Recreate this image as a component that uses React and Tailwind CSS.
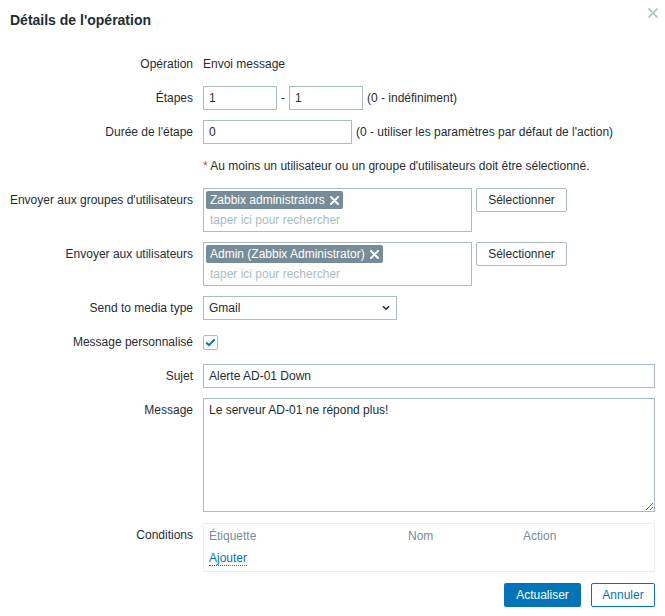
import React from "react";

function Label({ children }) {
  return (
    <div className="w-[193px] shrink-0 text-right leading-[24px] h-[24px] whitespace-nowrap">
      {children}
    </div>
  );
}

function Row({ label, children, className = "" }) {
  return (
    <div className={"flex items-start gap-[10px] " + className}>
      <Label>{label}</Label>
      <div className="flex-1 min-w-0">{children}</div>
    </div>
  );
}

function Tag({ children }) {
  return (
    <span className="inline-flex items-center h-[18px] bg-[#768d99] text-white rounded-[2px] pl-[4px] pr-[4px] leading-[18px] whitespace-nowrap">
      {children}
      <svg width="9" height="9" viewBox="0 0 9 9" className="ml-[5px]">
        <path d="M1 1 L8 8 M8 1 L1 8" stroke="white" strokeWidth="2" strokeLinecap="round" />
      </svg>
    </span>
  );
}

function Multi({ tag }) {
  return (
    <div className="flex items-start gap-[4px]">
      <div className="w-[269px] h-[44px] border border-[#acbbc2] bg-white px-[2px] pt-[2px]">
        <div className="flex">
          <Tag>{tag}</Tag>
        </div>
        <div className="pl-[4px] leading-[22px] text-[#acbbc2]">taper ici pour rechercher</div>
      </div>
      <button className="w-[91px] h-[24px] border border-[#acbbc2] bg-white text-[#1f2c33] rounded-[2px]">
        Sélectionner
      </button>
    </div>
  );
}

export default function App() {
  return (
    <div className="w-[665px] h-[616px] bg-white text-[12px] text-[#1f2c33] font-['Liberation_Sans',Arial,sans-serif] relative">
      <div className="h-[40px] flex items-center px-[10px]">
        <h1 className="text-[14px] font-bold">Détails de l'opération</h1>
      </div>
      <button className="absolute right-[6px] top-[7px] w-[12px] h-[12px]">
        <svg width="12" height="12" viewBox="0 0 12 12">
          <path d="M1.5 1.5 L10.5 10.5 M10.5 1.5 L1.5 10.5" stroke="#acbbc2" strokeWidth="1.6" />
        </svg>
      </button>

      <div className="pr-[10px] mt-[12px] flex flex-col gap-[10px]">
        <Row label="Opération">
          <div className="leading-[24px]">Envoi message</div>
        </Row>

        <Row label="Étapes">
          <div className="flex items-center">
            <input className="w-[74px] h-[24px] border border-[#acbbc2] px-[5px] outline-none" defaultValue="1" />
            <span className="mx-[4px]">-</span>
            <input className="w-[74px] h-[24px] border border-[#acbbc2] px-[5px] outline-none" defaultValue="1" />
            <span className="ml-[4px]">(0 - indéfiniment)</span>
          </div>
        </Row>

        <Row label="Durée de l'étape">
          <div className="flex items-center">
            <input className="w-[149px] h-[24px] border border-[#acbbc2] px-[5px] outline-none" defaultValue="0" />
            <span className="ml-[4px]">(0 - utiliser les paramètres par défaut de l'action)</span>
          </div>
        </Row>

        <Row label="">
          <div className="leading-[24px]">
            <span className="text-[#e33734]">*</span> Au moins un utilisateur ou un groupe d'utilisateurs doit être sélectionné.
          </div>
        </Row>

        <Row label="Envoyer aux groupes d'utilisateurs">
          <Multi tag="Zabbix administrators" />
        </Row>

        <Row label="Envoyer aux utilisateurs">
          <Multi tag="Admin (Zabbix Administrator)" />
        </Row>

        <Row label="Send to media type">
          <div className="w-[194px] h-[24px] border border-[#acbbc2] flex items-center justify-between pl-[5px] pr-[6px]">
            <span>Gmail</span>
            <svg width="8" height="6" viewBox="0 0 8 6">
              <path d="M1 1.2 L4 4.2 L7 1.2" fill="none" stroke="#1f2c33" strokeWidth="1.5" />
            </svg>
          </div>
        </Row>

        <Row label="Message personnalisé">
          <div className="h-[24px] flex items-center">
            <div className="w-[15px] h-[15px] border border-[#acbbc2] rounded-[2px] flex items-center justify-center">
              <svg width="11" height="9" viewBox="0 0 11 9">
                <path d="M1.2 4.5 L4 7.2 L9.8 1.4" fill="none" stroke="#0275b8" strokeWidth="2" />
              </svg>
            </div>
          </div>
        </Row>

        <Row label="Sujet">
          <input className="w-full h-[24px] border border-[#acbbc2] px-[5px] outline-none" defaultValue="Alerte AD-01 Down" />
        </Row>

        <Row label="Message">
          <textarea
            className="block w-full h-[114px] border border-[#acbbc2] px-[5px] py-[4px] outline-none leading-[14px]"
            defaultValue="Le serveur AD-01 ne répond plus!"
          />
        </Row>

        <Row label="Conditions" className="mt-[1px]">
          <div className="border border-[#ebeef0] h-[49px] px-[5px]">
            <div className="flex h-[24px] items-center text-[#768d99]">
              <div className="w-[199px]">Étiquette</div>
              <div className="w-[115px]">Nom</div>
              <div>Action</div>
            </div>
            <div className="h-[22px] flex items-center">
              <span className="text-[#0275b8] border-b border-dotted border-[#0275b8] leading-[13px]">Ajouter</span>
            </div>
          </div>
        </Row>

        <div className="flex justify-end gap-[10px] mt-[1px]">
          <button className="w-[77px] h-[24px] bg-[#0275b8] text-white rounded-[2px]">Actualiser</button>
          <button className="w-[64px] h-[24px] border border-[#0275b8] text-[#0275b8] bg-white rounded-[2px]">Annuler</button>
        </div>
      </div>
    </div>
  );
}
